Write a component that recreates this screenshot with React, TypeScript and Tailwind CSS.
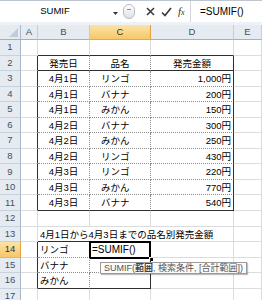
import type { ReactNode } from 'react';

type Bd = 'g' | 's' | 'd' | 'n';

const RB: Record<Bd, string> = {
  g: 'border-r border-r-[#dadcdd]',
  s: 'border-r border-r-[#2e2e2e]',
  d: 'border-r border-r-[#8c8c8c] [border-right-style:dotted]',
  n: 'border-r border-r-transparent',
};

const BB: Record<Bd, string> = {
  g: 'border-b border-b-[#dadcdd]',
  s: 'border-b border-b-[#2e2e2e]',
  d: 'border-b border-b-[#8c8c8c] [border-bottom-style:dotted]',
  n: 'border-b border-b-transparent',
};

interface CellSpec {
  t?: ReactNode;
  a?: 'l' | 'c' | 'r';
  r: Bd;
  b: Bd;
  pad?: string;
  active?: boolean;
}

const widths = ['w-[17px]', 'w-[52px]', 'w-[61px]', 'w-[83px]', 'flex-1'];

const sales = [
  ['4月1日', 'リンゴ', '1,000円'],
  ['4月1日', 'バナナ', '200円'],
  ['4月1日', 'みかん', '150円'],
  ['4月2日', 'バナナ', '300円'],
  ['4月2日', 'みかん', '250円'],
  ['4月2日', 'リンゴ', '430円'],
  ['4月3日', 'リンゴ', '220円'],
  ['4月3日', 'みかん', '770円'],
  ['4月3日', 'バナナ', '540円'],
];

const g: CellSpec = { r: 'g', b: 'g' };

const rows: CellSpec[][] = [
  [g, { r: 'g', b: 's' }, { r: 'g', b: 's' }, { r: 'g', b: 's' }, g],
  [
    { r: 's', b: 'g' },
    { t: '発売日', a: 'c', r: 'd', b: 's' },
    { t: '品名', a: 'c', r: 'd', b: 's' },
    { t: '発売金額', a: 'c', r: 's', b: 's' },
    g,
  ],
  ...sales.map((s, i): CellSpec[] => {
    const last = i === sales.length - 1 ? 's' : 'd';
    return [
      { r: 's', b: 'g' },
      { t: s[0], a: 'c', r: 'd', b: last },
      { t: s[1], a: 'l', pad: 'pl-[11px]', r: 'd', b: last },
      { t: s[2], a: 'r', pad: 'pr-[2px]', r: 's', b: last },
      g,
    ];
  }),
  [g, g, g, g, g],
  [
    g,
    { t: '4月1日から4月3日までの品名別発売金額', a: 'l', r: 'n', b: 's' },
    { r: 'n', b: 's' },
    g,
    g,
  ],
  [{ r: 's', b: 'g' }, { t: 'リンゴ', a: 'l', r: 'd', b: 'd' }, { r: 's', b: 'd', active: true }, g, g],
  [{ r: 's', b: 'g' }, { t: 'バナナ', a: 'l', r: 'd', b: 'd' }, { r: 's', b: 'd' }, g, g],
  [{ r: 's', b: 'g' }, { t: 'みかん', a: 'l', r: 'd', b: 's' }, { r: 's', b: 's' }, g, g],
  [g, g, g, g, g],
];

const jp = "font-['Liberation_Sans','Noto_Sans_CJK_JP',sans-serif]";

function Cell({ spec, w }: { spec: CellSpec; w: string }) {
  const align =
    spec.a === 'c' ? 'justify-center' : spec.a === 'r' ? 'justify-end' : 'justify-start';
  return (
    <div
      className={`${w} relative flex items-center ${align} ${spec.pad ?? 'px-[2px]'} ${RB[spec.r]} ${BB[spec.b]} text-[9.5px] leading-none text-black whitespace-nowrap ${jp}`}
    >
      {spec.t && <span className="relative pt-[1px]">{spec.t}</span>}
      {spec.active && (
        <>
          <span className="relative pt-[1px] font-['Liberation_Sans',sans-serif] text-[10px]">=SUMIF()</span>
          <div className="absolute left-[-1px] top-[-1px] w-[62px] h-[18px] border-2 border-black" />
          <div className="absolute left-[59px] top-[15px] w-[5px] h-[5px] bg-black border border-white" />
          <div className="absolute left-[10px] top-[20px] z-10 h-[12px] flex items-center px-[3px] bg-[#fbfbfb] border border-[#9a9a9a] shadow-[1px_1px_1px_rgba(0,0,0,0.25)] text-[9px] text-[#555]">
            SUMIF(<span className="font-bold text-[#444]">範囲</span>, 検索条件, [合計範囲])
          </div>
        </>
      )}
    </div>
  );
}

function RowHead({ n, sel }: { n: number; sel: boolean }) {
  return (
    <div
      className={`w-[21px] flex items-center justify-center border-r border-b text-[9.5px] font-['Liberation_Sans',sans-serif] ${
        sel
          ? 'bg-gradient-to-b from-[#fbe3a8] to-[#f6c866] border-r-[#e2a142] border-b-[#e9b45a] text-[#333]'
          : 'bg-[#e6ebf2] border-r-[#a9b8cb] border-b-[#c7d2df] text-[#44505f]'
      }`}
    >
      {n}
    </div>
  );
}

function FormulaBar() {
  return (
    <div className="h-[25px] flex flex-col bg-[#eef1f5]">
      <div className="h-[22px] flex border-t border-[#bcc5d0] bg-white">
        <div className="w-[120px] relative flex items-center justify-center pr-[10px] text-[9.5px] font-['Liberation_Sans',sans-serif] text-black">
          SUMIF
          <svg className="absolute right-[2px] top-[11px]" width="5" height="3" viewBox="0 0 5 3">
            <path d="M0 0h5L2.5 3z" fill="#333" />
          </svg>
        </div>
        <div className="w-[70px] flex items-center">
          <div className="ml-[3px] w-[12px] h-[15px] rounded-full border border-[#b5bcc6] bg-gradient-to-b from-[#ffffff] to-[#dde2e8] flex justify-center">
            <div className="mt-[4px] w-[4px] h-[1px] bg-[#8a919b]" />
          </div>
          <svg className="ml-[11px]" width="9" height="9" viewBox="0 0 9 9">
            <path d="M1 1l7 7M8 1L1 8" stroke="#3c3c3c" strokeWidth="1.6" />
          </svg>
          <svg className="ml-[6px]" width="11" height="10" viewBox="0 0 11 10">
            <path d="M1 5.5l3 3L10 1" stroke="#3c3c3c" strokeWidth="1.7" fill="none" />
          </svg>
          <span className="ml-[6px] text-[11px] italic font-['Liberation_Serif',serif] text-[#333] leading-none">
            f<span className="text-[8px]">x</span>
          </span>
        </div>
        <div className="flex-1 flex items-center border-l border-[#d3d7dc] pl-[9px] text-[10px] font-['Liberation_Sans',sans-serif] text-black">
          =SUMIF()
        </div>
      </div>
    </div>
  );
}

export default function App() {
  const letters = ['A', 'B', 'C', 'D', 'E'];
  return (
    <div className="w-[262px] h-[300px] overflow-hidden bg-white select-none">
      <FormulaBar />
      <div className="h-[15px] flex">
        <div className="w-[21px] relative bg-[#e6ebf2] border-r border-b border-r-[#a9b8cb] border-b-[#9fb1c7]">
          <svg className="absolute right-[2px] bottom-[2px]" width="9" height="9" viewBox="0 0 9 9">
            <path d="M9 0V9H0z" fill="#c3cbd6" />
          </svg>
        </div>
        {letters.map((l, i) => (
          <div
            key={l}
            className={`${widths[i]} flex items-center justify-center border-r border-b text-[9.5px] font-['Liberation_Sans',sans-serif] ${
              l === 'C'
                ? 'bg-gradient-to-b from-[#fbe3a8] to-[#f6c866] border-r-[#e2a142] border-b-[#f0a73e] text-[#333]'
                : 'bg-[#e6ebf2] border-r-[#c3cedc] border-b-[#9fb1c7] text-[#44505f]'
            }`}
          >
            {l}
          </div>
        ))}
      </div>
      {rows.map((row, ri) => (
        <div key={ri} className="h-[15.56px] flex">
          <RowHead n={ri + 1} sel={ri === 13} />
          {row.map((c, ci) => (
            <Cell key={ci} spec={c} w={widths[ci]} />
          ))}
        </div>
      ))}
    </div>
  );
}
